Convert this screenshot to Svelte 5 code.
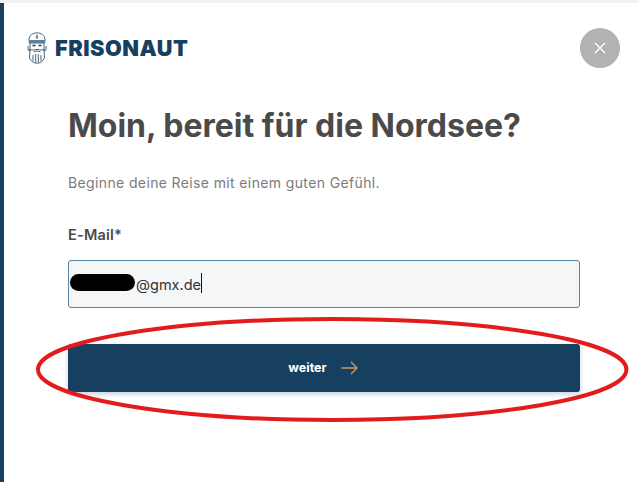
<script>
  const email = '@gmx.de';
</script>

<div class="page">
  <div class="topline"></div>
  <main class="modal">
    <header class="head">
      <div class="logo">
        <svg class="mark" viewBox="0 0 20 32" width="20" height="32" fill="none" stroke="#163f60" stroke-width="0.800">
          <path d="M2 8 C2 3 6 1 10 0.800 C14 1 18 3 18 8 L17.500 11 H2.500 Z" />
          <rect x="2.200" y="8" width="15.600" height="3" fill="#5f7f98" stroke="none" />
          <path d="M10 2.500 V7 M8.800 5 H11.200" />
          <path d="M3 11 V18 C3 19 1.500 19 1 18 V14 M17 11 V18 C17 19 18.500 19 19 18 V14" />
          <path d="M5.500 13.500 H8.500 M11.500 13.500 H14.500" stroke-width="1.300" />
          <path d="M3 17 C4 19 7 17.500 10 17.500 C13 17.500 16 19 17 17 L17.500 26 C16 29.500 13 31.200 10 31.200 C7 31.200 4 29.500 2.500 26 Z" />
          <path d="M6.500 20 C8 18.800 12 18.800 13.500 20 M6 23 V29 M8.700 22 V30.500 M11.300 22 V30.500 M14 23 V29" />
        </svg>
        <span class="brand">FRISONAUT</span>
      </div>
      <button class="close" aria-label="Schließen">
        <svg viewBox="0 0 12 12" width="12" height="12" stroke="#fff" stroke-width="1.300" fill="none">
          <path d="M1 1 L11 11 M11 1 L1 11" />
        </svg>
      </button>
    </header>

    <section class="content">
      <h1>Moin, bereit für die Nordsee?</h1>
      <p>Beginne deine Reise mit einem guten Gefühl.</p>
      <label for="email">E-Mail*</label>
      <div class="input" id="email">
        <span class="mask"></span><span class="value">{email}</span><span class="caret"></span>
      </div>
      <button class="next">
        <span>weiter</span>
        <svg viewBox="0 0 17 14" width="17" height="14" fill="none" stroke="#c9a15f" stroke-width="1.300">
          <path d="M0.500 7 H16 M10 1 L16 7 L10 13" />
        </svg>
      </button>
    </section>
  </main>

  <svg class="annotation" viewBox="0 0 639 482" width="639" height="482" fill="none">
    <ellipse cx="332.200" cy="369.500" rx="294.200" ry="50.500" stroke="#e31b1d" stroke-width="4" />
  </svg>
</div>

<style>
  :global(body) {
    margin: 0;
    background: #fff;
  }

  .page {
    position: relative;
    width: 639px;
    height: 482px;
    overflow: hidden;
    font-family: "Inter", "Open Sans", sans-serif;
    color: #4a4a4a;
  }

  .topline {
    height: 3px;
    background: #f2f2f2;
  }

  .modal {
    height: 479px;
    border-left: 4px solid #163f60;
    box-sizing: border-box;
    background: #fff;
  }

  .head {
    display: flex;
    justify-content: space-between;
    align-items: flex-start;
    padding: 25px 19px 0 24px;
  }

  .logo {
    display: flex;
    align-items: center;
    gap: 8px;
    height: 40px;
    margin-left: -1px;
  }

  .mark {
    display: block;
  }

  .brand {
    font-size: 21.700px;
    font-weight: 900;
    letter-spacing: 0.500px;
    color: #163f60;
  }

  .close {
    width: 40px;
    height: 40px;
    border: 0;
    padding: 0;
    border-radius: 50%;
    background: #b2b2b2;
    display: flex;
    align-items: center;
    justify-content: center;
  }

  .content {
    display: flex;
    flex-direction: column;
    padding: 0 59px 0 64px;
    margin-top: 35px;
  }

  h1 {
    margin: 0;
    font-size: 32px;
    line-height: 46px;
    font-weight: 700;
    color: #4a4a4a;
    white-space: nowrap;
  }

  p {
    margin: 24px 0 0;
    font-size: 14px;
    letter-spacing: 0.370px;
    line-height: 20px;
    color: #7b7b7b;
  }

  label {
    margin-top: 32px;
    font-size: 14.500px;
    letter-spacing: 0.200px;
    line-height: 20px;
    font-weight: 600;
    color: #4a4a4a;
  }

  .input {
    margin-top: 15px;
    height: 48px;
    box-sizing: border-box;
    border: 1px solid #5d84a0;
    border-radius: 3px;
    background: #f4f6f8;
    display: flex;
    align-items: center;
    padding-left: 1px;
    font-size: 14.500px;
    color: #333;
  }

  .mask {
    width: 65px;
    height: 17px;
    background: #000;
    border-radius: 9px;
    flex: none;
    margin-bottom: 4px;
  }

  .value {
    margin-left: 1px;
  }

  .caret {
    width: 1px;
    height: 20px;
    background: #111;
    margin-bottom: 2px;
  }

  .next {
    margin-top: 36px;
    height: 48px;
    border: 0;
    border-radius: 3px;
    background: #163f60;
    box-shadow: 0 2px 5px rgba(22, 63, 96, 0.25);
    display: flex;
    align-items: center;
    justify-content: center;
    gap: 14px;
    color: #fff;
    font-family: inherit;
    font-size: 12.500px;
    font-weight: 700;
    padding: 0 2px 1px 0;
  }

  .annotation {
    position: absolute;
    inset: 0;
    pointer-events: none;
  }
</style>
